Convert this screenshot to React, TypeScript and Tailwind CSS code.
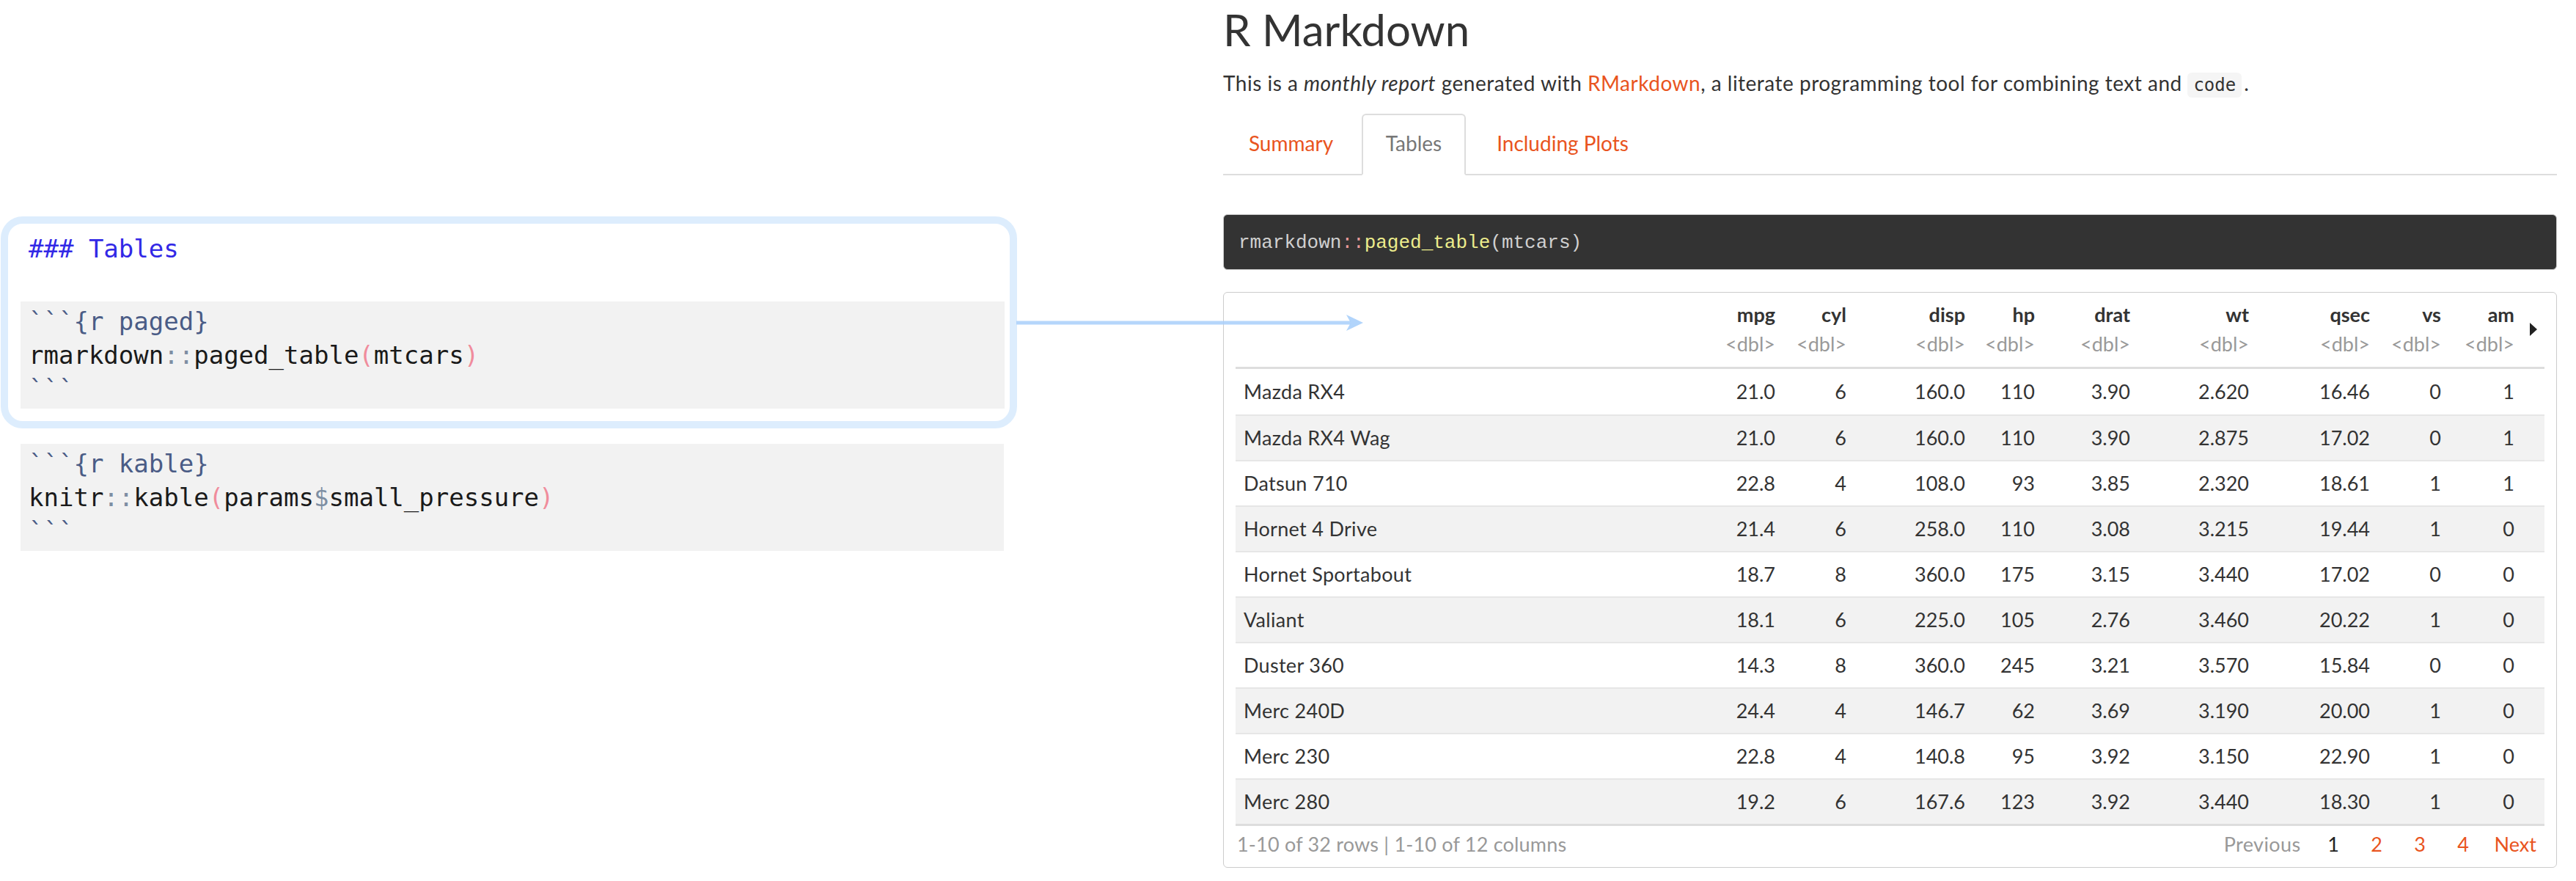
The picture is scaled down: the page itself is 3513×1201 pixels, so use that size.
const rows: [string, string, string, string, string, string, string, string, string, string][] = [
  ['Mazda RX4', '21.0', '6', '160.0', '110', '3.90', '2.620', '16.46', '0', '1'],
  ['Mazda RX4 Wag', '21.0', '6', '160.0', '110', '3.90', '2.875', '17.02', '0', '1'],
  ['Datsun 710', '22.8', '4', '108.0', '93', '3.85', '2.320', '18.61', '1', '1'],
  ['Hornet 4 Drive', '21.4', '6', '258.0', '110', '3.08', '3.215', '19.44', '1', '0'],
  ['Hornet Sportabout', '18.7', '8', '360.0', '175', '3.15', '3.440', '17.02', '0', '0'],
  ['Valiant', '18.1', '6', '225.0', '105', '2.76', '3.460', '20.22', '1', '0'],
  ['Duster 360', '14.3', '8', '360.0', '245', '3.21', '3.570', '15.84', '0', '0'],
  ['Merc 240D', '24.4', '4', '146.7', '62', '3.69', '3.190', '20.00', '1', '0'],
  ['Merc 230', '22.8', '4', '140.8', '95', '3.92', '3.150', '22.90', '1', '0'],
  ['Merc 280', '19.2', '6', '167.6', '123', '3.92', '3.440', '18.30', '1', '0'],
]

const columns = ['mpg', 'cyl', 'disp', 'hp', 'drat', 'wt', 'qsec', 'vs', 'am']

const grid =
  'grid grid-cols-[1fr_97px_97px_162px_95px_130px_162px_165px_97px_100px_30px]'

function SourcePanel() {
  return (
    <div className="w-[1387px] shrink-0 pl-[1px] pt-[295px] font-['DejaVu_Sans_Mono',monospace] text-[34px] leading-[46px] text-[#1a1a1a]">
      {/* highlighted chunk */}
      <div className="h-[289px] rounded-[30px] border-[10px] border-[#ddedfd] bg-white pt-[11px]">
        <div className="pl-[28px] text-[#3228e6] whitespace-pre">### Tables</div>
        <div className="mt-[49px] ml-[17px] mr-[7px] bg-[#f2f2f2] px-[11px] py-[4px] whitespace-pre">
          <div className="text-[#4a5c86]">```{'{r paged}'}</div>
          <div>
            rmarkdown<span className="text-[#7d8ea3]">::</span>paged_table
            <span className="text-[#f08c9c]">(</span>mtcars
            <span className="text-[#f08c9c]">)</span>
          </div>
          <div className="text-[#4a5c86]">```</div>
        </div>
      </div>

      <div className="mt-[21px] ml-[27px] w-[1341px] bg-[#f2f2f2] px-[11px] py-[4px] whitespace-pre">
        <div className="text-[#4a5c86]">```{'{r kable}'}</div>
        <div>
          knitr<span className="text-[#7d8ea3]">::</span>kable
          <span className="text-[#f08c9c]">(</span>params<span className="text-[#7d8ea3]">$</span>small_pressure
          <span className="text-[#f08c9c]">)</span>
        </div>
        <div className="text-[#4a5c86]">```</div>
      </div>
    </div>
  )
}

function PagedTable() {
  return (
    <div className="mt-[30px] rounded-[6px] border border-[#cccccc] px-[16px] text-[27px] leading-[40px] text-[#333]">
      {/* header */}
      <div className={`${grid} border-b-[3px] border-[#dddddd] pt-[10px] pb-[11px]`}>
        <div />
        {columns.map((c) => (
          <div key={c} className="flex flex-col items-end pr-[11px]">
            <span className="font-bold">{c}</span>
            <span className="text-[#999]">&lt;dbl&gt;</span>
          </div>
        ))}
        <div className="flex items-center justify-start pl-[9px]">
          <svg width="12" height="18" viewBox="0 0 12 18">
            <path d="M1 0 L11 9 L1 18 Z" fill="#222" />
          </svg>
        </div>
      </div>

      {/* rows */}
      {rows.map((r, i) => (
        <div
          key={r[0]}
          className={`${grid} h-[62px] items-center ${i > 0 ? 'border-t-2 border-[#e6e6e6]' : ''} ${
            i % 2 === 1 ? 'bg-[#f2f2f2]' : ''
          } ${i === rows.length - 1 ? 'border-b-[3px] border-b-[#dddddd] h-[65px]' : ''}`}
        >
          <div className="pl-[11px] tracking-[0.3px]">{r[0]}</div>
          {r.slice(1).map((v, j) => (
            <div key={j} className="text-right pr-[11px]">
              {v}
            </div>
          ))}
          <div />
        </div>
      ))}

      {/* footer */}
      <div className="flex h-[56px] items-start justify-between pl-[2px] pt-[5px]">
        <span className="text-[#999] tracking-[0.2px]">1-10 of 32 rows | 1-10 of 12 columns</span>
        <div className="flex pr-[11px]">
          <span className="pr-[15px] text-[#999] tracking-[0.4px]">Previous</span>
          <span className="w-[59px] text-center text-[#222]">1</span>
          <span className="w-[59px] text-center text-[#e95420]">2</span>
          <span className="w-[59px] text-center text-[#e95420]">3</span>
          <span className="w-[59px] text-center text-[#e95420]">4</span>
          <span className="pl-[13px] text-[#e95420]">Next</span>
        </div>
      </div>
    </div>
  )
}

function ReportPanel() {
  return (
    <div className="ml-[281px] w-[1819px] shrink-0 pt-[7px] font-['Lato',sans-serif] text-[#333]">
      <h1 className="text-[60px] leading-[66px] font-normal">R Markdown</h1>

      <p className="mt-[20px] text-[28px] leading-[40px] tracking-[0.5px]">
        This is a <em>monthly report</em> generated with{' '}
        <span className="text-[#e95420]">RMarkdown</span>, a literate programming tool for combining
        text and{' '}
        <code className="inline-block rounded-[6px] bg-[#f5f5f5] px-[8px] font-['DejaVu_Sans_Mono',monospace] text-[24px] leading-[34px] tracking-normal text-[#333]">
          code
        </code>
        <span className="ml-[3px]">.</span>
      </p>

      {/* tabs */}
      <div className="mt-[22px] flex border-b-2 border-[#dddddd] text-[28px] leading-[40px]">
        <div className="-mb-[2px] w-[185px] border-2 border-transparent pt-[18px] pb-[22px] text-center text-[#e95420]">
          Summary
        </div>
        <div className="-mb-[2px] ml-[4px] w-[142px] rounded-t-[6px] border-2 border-[#dddddd] border-b-white bg-white pt-[18px] pb-[22px] text-center text-[#777]">
          Tables
        </div>
        <div className="-mb-[2px] ml-[4px] w-[256px] border-2 border-transparent pt-[18px] pb-[22px] text-center text-[#e95420]">
          Including Plots
        </div>
      </div>

      {/* chunk echo */}
      <pre className="mt-[53px] rounded-[6px] border border-[#cccccc] bg-[#333333] pt-[20px] pb-[17px] pl-[20px] font-['Liberation_Mono',monospace] text-[26px] leading-[37px] text-[#d0d0d0]">
        rmarkdown<span className="text-[#e89a9a]">::</span>
        <span className="text-[#ecec8c]">paged_table</span>(mtcars)
      </pre>

      <PagedTable />
    </div>
  )
}

export default function App() {
  return (
    <div className="relative flex h-[1201px] w-[3513px] overflow-hidden bg-white">
      <SourcePanel />
      <ReportPanel />

      {/* connector arrow */}
      <svg className="pointer-events-none absolute left-0 top-0" width="3513" height="1201">
        <line x1="1386" y1="440" x2="1842" y2="440" stroke="#a9cffb" strokeWidth="5" opacity="0.85" />
        <path d="M1836 429 L1859 440 L1836 451 L1842 440 Z" fill="#a9cffb" opacity="0.9" />
      </svg>
    </div>
  )
}
